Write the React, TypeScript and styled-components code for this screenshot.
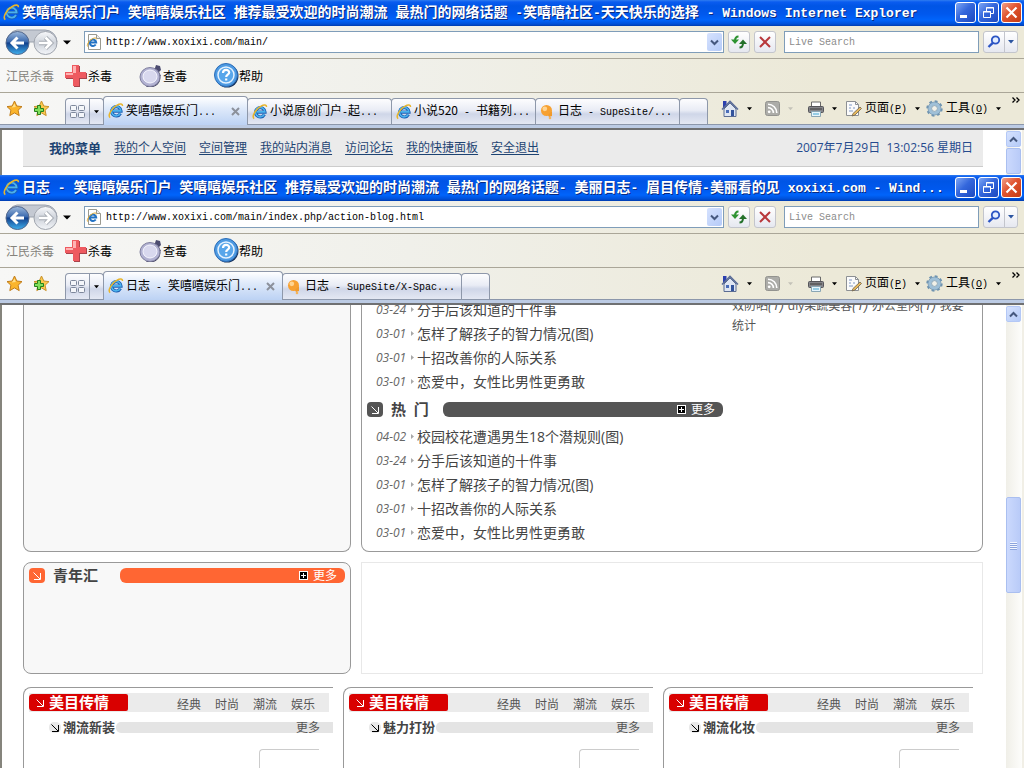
import React from 'react';
import styled, { createGlobalStyle, css } from 'styled-components';

const UI = `'Noto Sans CJK SC', sans-serif`;
const WEB = `'Open Sans', 'Noto Sans CJK SC', sans-serif`;

const Global = createGlobalStyle`
  * { box-sizing: border-box; }
  body { margin: 0; background: #fff; font-family: ${UI}; font-size: 12px; overflow: hidden; }
  button { font: inherit; color: inherit; background: none; border: 0; padding: 0; margin: 0; }
  svg { display: block; flex: none; }
  ul { list-style: none; margin: 0; padding: 0; }
  h1, h2, h3 { margin: 0; }
`;

/* ---------- mixed Chinese / fixed-width Latin text ---------- */
const Latin = styled.span<{ $size: number }>`
  font-family: 'Liberation Mono', monospace;
  font-size: ${p => p.$size}px;
`;
const Run = styled.span`white-space: pre;`;

function Mixed({ text, latin = 10 }: { text: string; latin?: number }) {
  return (
    <Run>
      {text.split(/([\x20-\x2f\x3a-\x7e]+)/).map((part, i) =>
        i % 2 ? <Latin key={i} $size={latin}>{part}</Latin> : part)}
    </Run>
  );
}

/* ---------- icons ---------- */
const IeIcon = ({ size = 17 }: { size?: number }) => (
  <svg width={size} height={size} viewBox="0 0 17 17">
    <path d="M13.2 11.2A5 5 0 1 1 13.8 8.6H5" fill="none" stroke="#1d5fb4" strokeWidth="3.4" />
    <path d="M13 11A5 5 0 1 1 13.6 8.4H5" fill="none" stroke="#4bb2ec" strokeWidth="1.8" />
    <path d="M2.3 15.6C-.8 13.2 4 5 9.6 2.2c3.4-1.8 6-1.4 5.8 1" fill="none" stroke="#e8b52c" strokeWidth="1.6" />
  </svg>
);
const PageIeIcon = () => (
  <svg width="16" height="16" viewBox="0 0 16 16">
    <path d="M2.5.5h8l4 4v11h-12z" fill="#fff" stroke="#9a9a90" />
    <path d="M10.500 .5v4h4" fill="#eee" stroke="#9a9a90" />
    <path d="M9.700 10.500A3.200 3.200 0 1 1 10.200 8.500H4" fill="none" stroke="#2272c4" strokeWidth="2" />
    <path d="M1.500 12.500C.5 10 4 5.500 7.500 4.300c2-.7 3-.2 2.900 1" fill="none" stroke="#e0a92c" />
  </svg>
);
const NavIcon = ({ id }: { id: string }) => (
  <svg width="54" height="27" viewBox="0 0 54 27">
    <defs>
      <linearGradient id={id + 'b'} x1="0" y1="0" x2="0" y2="1">
        <stop offset="0" stopColor="#9db9dc" /><stop offset=".45" stopColor="#3a69ae" />
        <stop offset=".5" stopColor="#12408c" /><stop offset="1" stopColor="#3fb0ee" />
      </linearGradient>
      <linearGradient id={id + 'f'} x1="0" y1="0" x2="0" y2="1">
        <stop offset="0" stopColor="#f8f9fb" /><stop offset=".5" stopColor="#cdd2da" /><stop offset="1" stopColor="#f4f6f9" />
      </linearGradient>
    </defs>
    <path d="M12 1h28a12 12 0 0 1 12 12H2A12 12 0 0 1 12 1z" fill="#c4c9d2" stroke="#9aa1ad" />
    <circle cx="12.500" cy="14" r="11.500" fill={`url(#${id}b)`} stroke="#54688c" />
    <circle cx="40.500" cy="14" r="11.500" fill={`url(#${id}f)`} stroke="#a0a5ae" />
    <path d="M19 14H8M12.500 8.500L7 14l5.500 5.500" fill="none" stroke="#fff" strokeWidth="3" />
    <path d="M34 14h11M40.500 8.500L46 14l-5.500 5.500" fill="none" stroke="#a3a8b0" strokeWidth="4.400" />
    <path d="M34 14h11M40.500 8.500L46 14l-5.500 5.500" fill="none" stroke="#fff" strokeWidth="2.600" />
  </svg>
);
const Caret = ({ color = '#000', w = 5 }: { color?: string; w?: number }) => (
  <svg width={w} height="4" viewBox="0 0 6 4"><path d="M0 0h6L3 3.600z" fill={color} /></svg>
);
const HistoryCaret = () => (
  <svg width="8" height="5" viewBox="0 0 8 5"><path d="M0 .5h8L4 4.500z" /></svg>
);
const Chevron = ({ up }: { up?: boolean }) => (
  <svg width="9" height="7" viewBox="0 0 9 7">
    <path d={up ? 'M1 5.500L4.500 2 8 5.500' : 'M1 1.500L4.500 5 8 1.500'} fill="none" stroke="#45587e" strokeWidth="2" />
  </svg>
);
const RefreshIcon = () => (
  <svg width="16" height="14" viewBox="0 0 16 14">
    <path d="M7.500 1.500C5 1.500 4 3 4 6" fill="none" stroke="#2d9331" strokeWidth="2" />
    <path d="M0 4.500h8L4 9z" fill="#2d9331" />
    <path d="M8.500 12.500c2.500 0 3.500-1.500 3.500-4.500" fill="none" stroke="#23702a" strokeWidth="2" />
    <path d="M8 9h8L12 4.500z" fill="#23702a" />
  </svg>
);
const StopIcon = () => (
  <svg width="12" height="12" viewBox="0 0 12 12">
    <path d="M1 1L11 11M11 1L1 11" stroke="#b8383c" strokeWidth="2" fill="none" />
  </svg>
);
const SearchIcon = () => (
  <svg width="14" height="14" viewBox="0 0 14 14">
    <circle cx="8.500" cy="5" r="3.700" fill="#e4eeff" stroke="#2c55c4" strokeWidth="1.800" />
    <path d="M5.800 7.800L1.500 12" stroke="#2c55c4" strokeWidth="2.400" />
  </svg>
);
const CrossIcon = () => (
  <svg width="24" height="24" viewBox="0 0 24 24">
    <path d="M9 2h7v7h7v6h-7v8h-6v-8H2V9h7z" fill="#a8434b" />
    <path d="M8 1h7v7h7v6h-7v8H9v-8H1V8h7z" fill="#ee5a60" />
    <path d="M9 2h3v7H9v2H2V9h7z" fill="#ffb3b3" />
  </svg>
);
const DiscIcon = () => (
  <svg width="24" height="24" viewBox="0 0 24 24">
    <path d="M14 5l2-1 1-3 4 1 1 4-2 2 2 4-4 1z" fill="#4c4c70" />
    <path d="M20 9c3 5 1 12-6 14H7z" fill="#303050" />
    <ellipse cx="11" cy="13" rx="10" ry="9.500" fill="#b2b2d2" stroke="#80809f" />
    <ellipse cx="11" cy="12.500" rx="7" ry="6.500" fill="#d8d8ee" stroke="#f6f6ff" />
  </svg>
);
const HelpIcon = () => (
  <svg width="25" height="25" viewBox="0 0 25 25">
    <circle cx="13" cy="13" r="11.500" fill="#17335d" />
    <circle cx="12" cy="12" r="11.500" fill="#4d9ae2" stroke="#2c6db8" />
    <circle cx="12" cy="12" r="8" fill="#58a6ea" stroke="#e4f2ff" strokeWidth="1.500" />
    <path d="M9 10c0-4 6.200-4 6.200-.5 0 2.200-3 2.200-3 4.500M12.200 15.500v2" fill="none" stroke="#fff" strokeWidth="2.200" />
  </svg>
);
const star = 'M8.500 1l2.300 5 5.200.6-3.900 3.600 1.100 5.400-4.700-2.700-4.700 2.700 1.100-5.400L1 6.600 6.200 6z';
const StarIcon = () => (
  <svg width="17" height="17" viewBox="0 0 17 17">
    <path d={star} fill="#fbb52c" stroke="#c17d1b" />
    <path d="M8.500 3.500L9.800 7l-4 .500z" fill="#ffe08a" />
  </svg>
);
const AddStarIcon = () => (
  <svg width="17" height="17" viewBox="0 0 17 17">
    <path d={star} fill="#fbc94e" stroke="#c9922b" />
    <path d="M4.500 5.500h3v3h3v3h-3v3h-3v-3h-3v-3h3z" fill="#7fe05c" stroke="#27801c" />
  </svg>
);
const QuickIcon = () => (
  <svg width="16" height="14" viewBox="0 0 16 14">
    <g fill="#f4f6fa" stroke="#7d879b">
      <rect x=".5" y=".5" width="6" height="5" rx="1" /><rect x="8.500" y=".5" width="6" height="5" rx="1" />
      <rect x=".5" y="7.500" width="6" height="5" rx="1" /><rect x="8.500" y="7.500" width="6" height="5" rx="1" />
    </g>
  </svg>
);
const BalloonIcon = () => (
  <svg width="16" height="16" viewBox="0 0 16 16">
    <circle cx="6.500" cy="6.500" r="5.500" fill="#f7a132" /><circle cx="4.800" cy="4.800" r="2.400" fill="#ffd491" />
    <path d="M8 11l4-4v5l-3 1z" fill="#f09a2c" /><circle cx="10" cy="14" r="1.300" fill="#f5b55c" />
  </svg>
);
const HomeIcon = () => (
  <svg width="18" height="18" viewBox="0 0 18 18">
    <path d="M2 1h3.500v7H2z" fill="#2b3fae" />
    <path d="M3 9v7.500h12V9L9 3z" fill="#dfe6f2" stroke="#5b6c92" />
    <path d="M1 9.500L9 1.500l8 8" fill="none" stroke="#5a6c98" strokeWidth="1.600" />
    <path d="M5 10h3v3H5z" fill="#4a6db8" /><path d="M10 10h3v6h-3z" fill="#33549c" />
  </svg>
);
const RssIcon = () => (
  <svg width="15" height="15" viewBox="0 0 15 15">
    <rect x=".5" y=".5" width="14" height="14" rx="2" fill="#acaca8" stroke="#93938f" />
    <circle cx="4.200" cy="10.800" r="1.400" fill="#fff" />
    <path d="M3 6.600a5.400 5.400 0 0 1 5.400 5.400M3 3.200A8.800 8.800 0 0 1 11.800 12" fill="none" stroke="#fff" strokeWidth="1.600" />
  </svg>
);
const PrinterIcon = () => (
  <svg width="16" height="16" viewBox="0 0 16 16">
    <path d="M3.500 1h9v5h-9z" fill="#fff" stroke="#6a6a6a" />
    <rect x=".5" y="5.500" width="15" height="6" rx="1" fill="#85858a" stroke="#55555a" />
    <path d="M2 8h12" stroke="#3c3c3c" /><path d="M3.500 10.500h9v5h-9z" fill="#e6f4fb" stroke="#8aa6b4" />
    <path d="M5 13h6" stroke="#45a5d0" />
  </svg>
);
const PageIcon = () => (
  <svg width="16" height="17" viewBox="0 0 16 17">
    <path d="M.5 1.500h9l3 3v11H.5z" fill="#fbfbfb" stroke="#8d9094" />
    <path d="M9.500 1.500v3h3" fill="none" stroke="#8d9094" />
    <path d="M3 5h3M3 8h2M7 8h2M3 11h4" stroke="#7f97c4" />
    <path d="M7 13.500l7-6.500 1.500 1.500L9 15l-3 1z" fill="#e8b95c" stroke="#6c6250" strokeWidth=".8" />
  </svg>
);
const GearIcon = () => (
  <svg width="17" height="17" viewBox="0 0 17 17">
    <circle cx="8.500" cy="8.500" r="7" fill="none" stroke="#6e93b0" strokeWidth="2.400" strokeDasharray="2.750 2.750" />
    <circle cx="8.500" cy="8.500" r="4.800" fill="none" stroke="#9fc0d8" strokeWidth="3.400" />
    <circle cx="8.500" cy="8.500" r="6.500" fill="none" stroke="#7698b2" strokeWidth=".8" />
    <circle cx="8.500" cy="8.500" r="2.900" fill="#f2f1e8" stroke="#7698b2" strokeWidth=".8" />
  </svg>
);
const MoreChevrons = () => (
  <svg width="8" height="6" viewBox="0 0 8 6">
    <path d="M.5.5L3 3 .5 5.500M4.500.5L7 3 4.500 5.500" fill="none" stroke="#000" strokeWidth="1.300" />
  </svg>
);
const MinGlyph = () => <svg width="19" height="19"><path d="M4 12h7v3H4z" fill="#fff" /></svg>;
const RestoreGlyph = () => (
  <svg width="19" height="19">
    <path d="M7.500 8V4.500h7v6H12M7 5h8M4.500 8.500h7v6h-7zM4 9h8" fill="none" stroke="#fff" />
  </svg>
);
const CloseGlyph = () => (
  <svg width="19" height="19"><path d="M4.500 4.500l10 10M14.500 4.500l-10 10" stroke="#fff" strokeWidth="2.200" /></svg>
);
const DiagArrow = ({ color = '#fff' }: { color?: string }) => (
  <svg width="8" height="8" viewBox="0 0 8 8">
    <path d="M.5.500l6.500 6.500M7.500 1v6.500H1" fill="none" stroke={color} />
  </svg>
);
const PlusBox = () => (
  <svg width="9" height="9" viewBox="0 0 9 9">
    <rect x=".5" y=".5" width="8" height="8" fill="#000" stroke="#fff" />
    <path d="M2 4.500h5M4.500 2v5" stroke="#fff" />
  </svg>
);
const Bullet = () => (
  <svg width="3" height="5" viewBox="0 0 3 5"><path d="M0 0l3 2.500L0 5z" fill="#a8a8a8" /></svg>
);

/* ---------- browser chrome ---------- */
const Desktop = styled.div`
  display: flex; flex-direction: column; height: 100vh; overflow: hidden;
`;
const WindowFrame = styled.section<{ $fill?: boolean }>`
  display: flex; flex-direction: column; min-width: 0;
  ${p => p.$fill ? css`flex: 1; min-height: 0;` : css`flex: none;`}
`;
const TitleBar = styled.header`
  display: flex; align-items: center; gap: 2px; height: 26px; padding: 0 2px 1px 3px;
  background: linear-gradient(#2f7df0 0, #0a5cf0 2px, #0055e5 6px, #0058ee 14px, #0064fb 20px, #0050d8 24px, #003cae 26px);
  color: #fff;
`;
const TitleText = styled.h1`
  flex: 1; min-width: 0; overflow: hidden; white-space: nowrap;
  font-size: 14px; line-height: 24px; font-weight: 700; text-shadow: 1px 1px 0 #0a2a80;
`;
const WinButtons = styled.div`display: flex; gap: 2px;`;
const WinButton = styled.button<{ $danger?: boolean }>`
  width: 21px; height: 21px; border: 1px solid #fff; border-radius: 3px;
  background: ${p => p.$danger
    ? 'linear-gradient(135deg, #f0a08a, #e0532f 45%, #c43c14)'
    : 'linear-gradient(135deg, #7ea6f4, #3467dc 45%, #1c49c0)'};
`;
const Bar = styled.div<{ $h: number; $pad: string }>`
  display: flex; align-items: center; height: ${p => p.$h}px; padding: ${p => p.$pad};
  background: linear-gradient(90deg, #f7f7f6, #f0f0ea 40%, #ece9d8 80%);
  border-bottom: 1px solid #aaa698;
`;
const NavButton = styled.button`display: flex; flex: none;`;
const DropButton = styled.button`
  display: flex; align-items: center; width: 25px; height: 22px; padding-left: 4px;
`;
const Field = styled.div<{ $w?: number }>`
  display: flex; align-items: center; height: 22px; background: #fff; border: 1px solid #7f9db9;
  padding: 1px; min-width: 0;
  ${p => p.$w ? css`flex: none; width: ${p.$w}px; padding: 1px 0;` : css`flex: 1;`}
`;
const Input = styled.input`
  flex: 1; min-width: 0; border: 0; outline: 0; background: none; padding: 0 4px;
  font: 10px 'Liberation Mono', monospace; color: #000;
  &::placeholder { color: #8c8c8c; opacity: 1; }
`;
const BlueButton = styled.button`
  display: flex; align-items: center; justify-content: center; flex: none;
  width: 15px; height: 18px; border-radius: 2px;
  background: linear-gradient(135deg, #d6e2fe, #b5cbf8);
`;
const ToolButtons = styled.div`display: flex; gap: 4px; margin: 0 8px 0 4px;`;
const ToolButton = styled.button`
  display: flex; align-items: center; justify-content: center; width: 22px; height: 22px;
  border: 1px solid #c3c5cc; border-radius: 3px; background: linear-gradient(#fff, #e6e8f0);
`;
const SearchGroup = styled.div`
  display: flex; margin-left: 4px;
  ${ToolButton}:first-child { border-radius: 3px 0 0 3px; }
  ${ToolButton}:last-child { width: 14px; margin-left: -1px; border-radius: 0 3px 3px 0; }
`;
const VendorName = styled.span`color: #85837c; width: 58px;`;
const VendorButton = styled.button`
  display: flex; align-items: center; width: 75px; line-height: 24px;
`;
const TabRow = styled(Bar)`align-items: stretch; border-bottom-color: #8c97ab;`;
const Favourites = styled.div`
  display: flex; align-items: center; gap: 10px; width: 59px;
`;
const tabLook = css`
  border: 1px solid #8e98aa; border-bottom: 0; border-radius: 4px 4px 0 0;
  background: linear-gradient(#fdfdfe 0, #e9ecf5 45%, #cfd6e8 60%, #e4e8f3 100%);
`;
const QuickTabs = styled.div`
  ${tabLook} display: flex; flex: none; width: 39px; margin-top: 5px;
`;
const QuickButton = styled.button<{ $narrow?: boolean }>`
  display: flex; align-items: center; justify-content: center;
  width: ${p => p.$narrow ? 14 : 23}px;
  ${p => p.$narrow && css`border-left: 1px solid #8e98aa;`}
`;
const Tab = styled.div<{ $w: number; $active?: boolean }>`
  ${tabLook}
  display: flex; align-items: center; flex: 0 1 ${p => p.$w}px; min-width: 0; overflow: hidden;
  margin-top: 5px; margin-left: -1px; padding: 0 7px 0 4px;
  ${p => p.$active && css`
    margin-top: 3px; margin-bottom: -1px;
    background: linear-gradient(#fff, #dfeafa 40%, #bcd2f4);
  `}
`;
const TabLabel = styled.button`
  display: flex; align-items: center; gap: 2px; flex: 1; min-width: 0; overflow: hidden; line-height: 20px;
`;
const TabClose = styled.button`display: flex; flex: none;`;
const Commands = styled.div`
  display: flex; align-items: center; margin-left: auto; padding-left: 13px;
`;
const Command = styled.button<{ $w: number }>`
  display: flex; align-items: center; gap: 3px; width: ${p => p.$w}px; line-height: 20px;
  & > svg:last-child { margin-left: 5px; }
`;
const Overflow = styled.button`align-self: flex-start; margin-top: 4px;`;
const Lip = styled.div`
  flex: none; height: 5px; border-bottom: 2px solid #6f7072;
  background: #bccbe4;
`;
const Viewport = styled.div<{ $fill?: boolean }>`
  display: flex; background: #fff; border-left: 2px solid #85847c; border-right: 2px solid #f1efe6;
  ${p => p.$fill && css`flex: 1; min-height: 0;`}
`;
const Document = styled.main`
  flex: 1; min-width: 0; padding: 0 23px 0 21px; overflow: hidden; font-family: ${WEB}; color: #444;
`;
const ScrollTrack = styled.div`
  display: flex; flex-direction: column; flex: none; width: 16px; padding: 1px 0; overflow: hidden;
  background: linear-gradient(90deg, #f0efe8, #fdfdfb); gap: 1px;
`;
const ScrollButton = styled(BlueButton)`width: 15px; height: 16px; border: 1px solid #b4c8f6;`;
const ScrollGap = styled.div`flex: 1;`;
const Thumb = styled.div<{ $h?: number }>`
  display: flex; flex-direction: column; align-items: center; justify-content: center; gap: 1px;
  width: 15px; border: 1px solid #aabff0; border-radius: 2px;
  background: linear-gradient(90deg, #cbd9fd, #b9cbf8);
  ${p => p.$h ? css`flex: none; height: ${p.$h}px;` : css`flex: 1;`}
`;
const Grip = styled.i`width: 7px; height: 1px; background: #f2f6ff; box-shadow: 0 1px 0 #8ca4dc;`;

type TabInfo = { label: string; icon: 'ie' | 'balloon'; active?: boolean };
type BrowserProps = {
  id: string; title: string; url: string; tabs: TabInfo[]; tabWidth: number;
  fill?: boolean; children: React.ReactNode;
};

function BrowserWindow({ id, title, url, tabs, tabWidth, fill, children }: BrowserProps) {
  return (
    <WindowFrame $fill={fill}>
      <TitleBar>
        <IeIcon />
        <TitleText><Mixed text={title} latin={13} /></TitleText>
        <WinButtons>
          <WinButton aria-label="最小化"><MinGlyph /></WinButton>
          <WinButton aria-label="还原"><RestoreGlyph /></WinButton>
          <WinButton aria-label="关闭" $danger><CloseGlyph /></WinButton>
        </WinButtons>
      </TitleBar>

      <Bar $h={33} $pad="0 6px 0 5px">
        <NavButton aria-label="后退和前进"><NavIcon id={id} /></NavButton>
        <DropButton aria-label="历史记录"><HistoryCaret /></DropButton>
        <Field>
          <PageIeIcon />
          <Input aria-label="地址" defaultValue={url} />
          <BlueButton aria-label="展开地址"><Chevron /></BlueButton>
        </Field>
        <ToolButtons>
          <ToolButton aria-label="刷新"><RefreshIcon /></ToolButton>
          <ToolButton aria-label="停止"><StopIcon /></ToolButton>
        </ToolButtons>
        <Field $w={195}><Input aria-label="搜索" placeholder="Live Search" /></Field>
        <SearchGroup>
          <ToolButton aria-label="搜索"><SearchIcon /></ToolButton>
          <ToolButton aria-label="搜索选项"><Caret color="#2c55a0" w={6} /></ToolButton>
        </SearchGroup>
      </Bar>

      <Bar $h={34} $pad="0 6px">
        <VendorName>江民杀毒</VendorName>
        <VendorButton><CrossIcon />杀毒</VendorButton>
        <VendorButton><DiscIcon />查毒</VendorButton>
        <VendorButton><HelpIcon />帮助</VendorButton>
      </Bar>

      <TabRow $h={32} $pad="0 4px 0 6px">
        <Favourites>
          <button aria-label="收藏中心"><StarIcon /></button>
          <button aria-label="添加到收藏夹"><AddStarIcon /></button>
        </Favourites>
        <QuickTabs>
          <QuickButton aria-label="快速导航选项卡"><QuickIcon /></QuickButton>
          <QuickButton aria-label="选项卡列表" $narrow><Caret /></QuickButton>
        </QuickTabs>
        {tabs.map(t => (
          <Tab key={t.label} $w={tabWidth} $active={t.active}>
            <TabLabel>
              {t.icon === 'ie' ? <IeIcon size={16} /> : <BalloonIcon />}
              <Mixed text={t.label} />
            </TabLabel>
            {t.active && (
              <TabClose aria-label="关闭选项卡">
                <svg width="9" height="9"><path d="M1 1l7 7M8 1L1 8" stroke="#8c919b" strokeWidth="2" /></svg>
              </TabClose>
            )}
          </Tab>
        ))}
        <Tab as="button" $w={29} aria-label="新选项卡" />
        <Commands>
          <Command $w={44} aria-label="主页"><HomeIcon /><Caret /></Command>
          <Command $w={43} aria-label="源"><RssIcon /><Caret color="#c4c2b8" /></Command>
          <Command $w={38} aria-label="打印"><PrinterIcon /><Caret /></Command>
          <Command $w={80}><PageIcon /><span>页面<Latin $size={10}>(<u>P</u>)</Latin></span><Caret /></Command>
          <Command $w={86}><GearIcon /><span>工具<Latin $size={10}>(<u>O</u>)</Latin></span><Caret /></Command>
        </Commands>
        <Overflow aria-label="更多命令"><MoreChevrons /></Overflow>
      </TabRow>
      <Lip />

      <Viewport $fill={fill}>
        <Document>{children}</Document>
        <ScrollTrack>
          <ScrollButton aria-label="向上滚动"><Chevron up /></ScrollButton>
          {fill ? (
            <>
              <ScrollGap />
              <Thumb $h={96}><Grip /><Grip /><Grip /><Grip /></Thumb>
              <ScrollGap />
            </>
          ) : <Thumb />}
        </ScrollTrack>
      </Viewport>
    </WindowFrame>
  );
}

/* ---------- page of the rear window ---------- */
const UserBar = styled.nav`
  display: flex; align-items: center; gap: 13px; height: 37px; margin-bottom: 8px; padding: 0 10px 2px 26px;
  background: #ebebeb; border-bottom: 1px solid #ccc; color: #1d4372; white-space: nowrap;
  strong { font-size: 13px; }
  a { color: #1d4372; text-underline-offset: 2px; }
  time { margin-left: auto; color: #254a8e; }
`;

/* ---------- page of the front window ---------- */
const Split = styled.div`
  display: grid; grid-template-columns: 328px minmax(0, 1fr); gap: 10px; margin-bottom: 10px;
`;
const Card = styled.section<{ $open?: boolean; $tint?: boolean }>`
  border: 1px solid #999; border-radius: 8px; padding: 5px;
  background: ${p => p.$tint ? '#f8f8f8' : '#fff'};
  ${p => p.$open && css`border-top: 0; border-radius: 0 0 8px 8px; padding: 0 5px 7px;`}
`;
const ArticleCard = styled(Card)`
  display: grid; grid-template-columns: 356px minmax(0, 1fr); column-gap: 9px;
`;
const Scrolled = styled.div`margin-top: -8px;`;
const Article = styled.li`
  display: flex; align-items: center; height: 24px; padding-left: 9px; font-size: 14px; color: #444;
  time { width: 35px; font-size: 12px; font-style: italic; color: #666; }
  a { color: inherit; text-decoration: none; margin-left: 3px; }
`;
const Tags = styled.p`
  margin: -9px 0 0; line-height: 20px; font-size: 12px; color: #555; white-space: nowrap;
  em { font-size: 14px; line-height: 1; margin-right: 1px; }
`;
const Heading = styled.div<{ $gap?: boolean }>`
  display: flex; align-items: center; height: 15px;
  ${p => p.$gap && css`margin: 9px 0 7px;`}
`;
const Badge = styled.span<{ $color: string }>`
  display: flex; align-items: center; justify-content: center; flex: none;
  width: 16px; height: 15px; border-radius: 4px; background: ${p => p.$color};
`;
const HeadingText = styled.h2<{ $w: number }>`
  width: ${p => p.$w}px; padding-left: 8px; font-size: 15px; line-height: 15px; color: #444; white-space: pre;
`;
const HeadingBar = styled.div<{ $color: string }>`
  display: flex; align-items: center; justify-content: flex-end; gap: 5px; flex: 1; height: 15px;
  padding-right: 8px; border-radius: 6px; background: ${p => p.$color};
  a { color: #fff; text-decoration: none; line-height: 15px; }
`;
const AdSlot = styled.div`border: 1px solid #e8e8e8; height: 112px;`;
const Columns = styled.div`
  display: grid; grid-template-columns: repeat(3, minmax(0, 1fr)); gap: 10px; margin-top: 13px; padding-right: 10px;
`;
const Column = styled.section`
  height: 160px; border: solid #999; border-width: 1px 0 0 1px; border-top-left-radius: 8px; padding: 5px 0 0 5px;
`;
const ColumnHead = styled.div`
  display: flex; align-items: center; height: 19px; margin-right: 4px; background: #ebebeb;
`;
const RedTitle = styled.h2`
  display: flex; align-items: center; gap: 5px; width: 99px; height: 17px; padding-left: 7px;
  border-radius: 4px 2px 2px 4px; background: #d90000; color: #fff; font-size: 15px; line-height: 17px; white-space: nowrap;
`;
const ColumnLinks = styled.nav`
  display: flex; gap: 14px; margin-left: auto; padding: 3px 14px 0 0; line-height: 19px;
  a { color: #555; text-decoration: none; }
`;
const SubHead = styled.div`
  display: flex; align-items: center; height: 11px; margin: 10px 0 16px 20px;
`;
const SubTitle = styled.h3`
  display: flex; align-items: center; padding: 0 1px 0 2px; font-size: 13px; line-height: 11px; color: #444;
  white-space: nowrap;
`;
const SubBar = styled.div`
  display: flex; align-items: center; justify-content: flex-end; flex: 1; height: 11px; padding-right: 13px;
  border-radius: 5px 0 0 5px; background: #e4e4e4;
  a { color: #555; text-decoration: none; line-height: 11px; }
`;
const Dot = styled.span`
  display: flex; align-items: center; justify-content: center; width: 12px; height: 11px;
  border-radius: 5px; background: #e8e8e8;
`;
const Picture = styled.div`
  width: 60px; height: 80px; margin: 0 14px 0 auto; border: solid #ccc; border-width: 1px 0 0 1px; border-top-left-radius: 4px;
`;

const articles = [
  ['04-02', '校园校花遭遇男生18个潜规则(图)'],
  ['03-24', '分手后该知道的十件事'],
  ['03-01', '怎样了解孩子的智力情况(图)'],
  ['03-01', '十招改善你的人际关系'],
  ['03-01', '恋爱中，女性比男性更勇敢'],
];

const ArticleList = ({ items }: { items: string[][] }) => (
  <ul>
    {items.map(([date, text]) => (
      <Article key={text}><time>{date}</time><Bullet /><a href="#article">{text}</a></Article>
    ))}
  </ul>
);

const SectionHeading = ({ text, color, width, gap }: { text: string; color: string; width: number; gap?: boolean }) => (
  <Heading $gap={gap}>
    <Badge $color={color}><DiagArrow /></Badge>
    <HeadingText $w={width}>{text}</HeadingText>
    <HeadingBar $color={color}><PlusBox /><a href="#more">更多</a></HeadingBar>
  </Heading>
);

export default function App() {
  return (
    <Desktop>
      <Global />
      <BrowserWindow
        id="rear"
        title="笑嘻嘻娱乐门户 笑嘻嘻娱乐社区 推荐最受欢迎的时尚潮流 最热门的网络话题 -笑嘻嘻社区-天天快乐的选择 - Windows Internet Explorer"
        url="http://www.xoxixi.com/main/"
        tabWidth={145}
        tabs={[
          { label: '笑嘻嘻娱乐门...', icon: 'ie', active: true },
          { label: '小说原创门户-起...', icon: 'ie' },
          { label: '小说520 - 书籍列...', icon: 'ie' },
          { label: '日志 - SupeSite/...', icon: 'balloon' },
        ]}
      >
        <UserBar>
          <strong>我的菜单</strong>
          {['我的个人空间', '空间管理', '我的站内消息', '访问论坛', '我的快捷面板', '安全退出'].map(t => (
            <a key={t} href="#menu">{t}</a>
          ))}
          <time>2007年7月29日&nbsp; 13:02:56 星期日</time>
        </UserBar>
      </BrowserWindow>

      <BrowserWindow
        id="front"
        fill
        title="日志 - 笑嘻嘻娱乐门户 笑嘻嘻娱乐社区 推荐最受欢迎的时尚潮流 最热门的网络话题- 美丽日志- 眉目传情-美丽看的见 xoxixi.com - Wind..."
        url="http://www.xoxixi.com/main/index.php/action-blog.html"
        tabWidth={180}
        tabs={[
          { label: '日志 - 笑嘻嘻娱乐门...', icon: 'ie', active: true },
          { label: '日志 - SupeSite/X-Spac...', icon: 'balloon' },
        ]}
      >
        <Split>
          <Card $open $tint />
          <ArticleCard $open>
            <Scrolled>
              <ArticleList items={articles.slice(1)} />
              <SectionHeading text="热  门" color="#555" width={60} gap />
              <ArticleList items={articles} />
            </Scrolled>
            <Tags>
              效防晒<em>(1)</em> diy果蔬美容<em>(1)</em> 办公室内<em>(1)</em> 我要<br />统计
            </Tags>
          </ArticleCard>
        </Split>
        <Split>
          <Card $tint><SectionHeading text="青年汇" color="#ff6633" width={75} /></Card>
          <AdSlot />
        </Split>
        <Columns>
          {['潮流新装', '魅力打扮', '潮流化妆'].map(name => (
            <Column key={name}>
              <ColumnHead>
                <RedTitle><DiagArrow />美目传情</RedTitle>
                <ColumnLinks>
                  {['经典', '时尚', '潮流', '娱乐'].map(t => <a key={t} href="#topic">{t}</a>)}
                </ColumnLinks>
              </ColumnHead>
              <SubHead>
                <Dot><DiagArrow color="#000" /></Dot>
                <SubTitle>{name}</SubTitle>
                <SubBar><a href="#more">更多</a></SubBar>
              </SubHead>
              <Picture />
            </Column>
          ))}
        </Columns>
      </BrowserWindow>
    </Desktop>
  );
}
